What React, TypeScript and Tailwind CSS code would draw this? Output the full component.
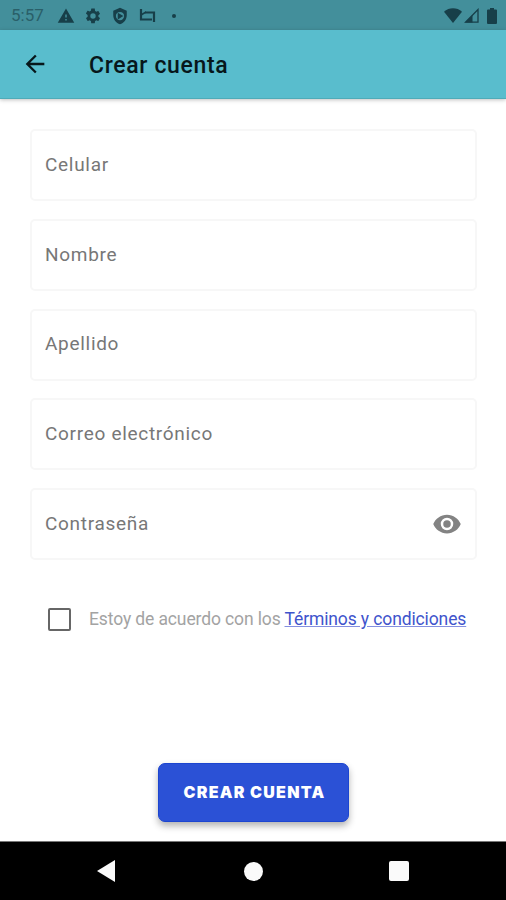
import type { ReactNode } from "react"

const fields = [
  { label: "Celular" },
  { label: "Nombre" },
  { label: "Apellido" },
  { label: "Correo electrónico" },
  { label: "Contraseña", secret: true },
]

function Glyph({ className, children }: { className: string; children: ReactNode }) {
  return (
    <svg viewBox="0 0 24 24" fill="currentColor" className={`shrink-0 ${className}`} aria-hidden="true">
      {children}
    </svg>
  )
}

function StatusBar() {
  return (
    <div className="flex h-[30px] items-center bg-[#438f9b] pl-[11px] pr-[7px] pt-px text-[#173f49]">
      <span className="w-[46px] text-[17px] leading-none text-[#2a5f69]">5:57</span>
      <Glyph className="h-[18px] w-[18px]">
        <path d="M1 21h22L12 2 1 21zm12-3h-2v-2h2v2zm0-4h-2v-4h2v4z" />
      </Glyph>
      <Glyph className="ml-[9px] h-[18px] w-[18px]">
        <path d="M19.14 12.94c.04-.3.06-.61.06-.94s-.02-.64-.07-.94l2.03-1.58a.49.49 0 0 0 .12-.61l-1.92-3.32a.49.49 0 0 0-.59-.22l-2.39.96a7 7 0 0 0-1.62-.94l-.36-2.54A.48.48 0 0 0 13.92 2h-3.84a.48.48 0 0 0-.48.41l-.36 2.54c-.59.24-1.13.57-1.62.94l-2.39-.96a.48.48 0 0 0-.59.22L2.72 8.47a.48.48 0 0 0 .12.61l2.03 1.58a7.8 7.8 0 0 0 0 2.28l-2.03 1.58a.49.49 0 0 0-.12.61l1.92 3.32c.12.22.37.29.59.22l2.39-.96c.5.38 1.03.7 1.62.94l.36 2.54c.05.24.24.41.48.41h3.84c.24 0 .44-.17.47-.41l.36-2.54a7 7 0 0 0 1.62-.94l2.39.96c.22.08.47 0 .59-.22l1.92-3.32a.48.48 0 0 0-.12-.61zM12 15.6a3.6 3.6 0 1 1 0-7.2 3.6 3.6 0 0 1 0 7.2z" />
      </Glyph>
      <Glyph className="ml-[9px] h-[18px] w-[18px]">
        <path
          fillRule="evenodd"
          d="M12 1 3 5v6c0 5.55 3.84 10.74 9 12 5.16-1.26 9-6.45 9-12V5zM12 6.500a5.500 5.500 0 1 0 0 11 5.500 5.500 0 0 0 0-11z"
        />
        <path d="M9 7.500v9l7.500-4.500z" />
      </Glyph>
      <svg viewBox="0 0 18 18" className="ml-[9px] h-[18px] w-[18px] shrink-0" fill="none" stroke="currentColor" strokeWidth="2.200" aria-hidden="true">
        <path d="M3 2v10.500h11M7 5.500h9V15" />
        <path d="m3 8 5-3" strokeWidth="1.500" />
      </svg>
      <span className="ml-[16px] h-1 w-1 rounded-full bg-current" />

      <div className="ml-auto flex items-center">
        <svg viewBox="0 0 18 15" className="h-[15px] w-[18px]" fill="currentColor" aria-hidden="true">
          <path d="M0 3.800C5-.8 13-.8 18 3.800L9 15z" />
        </svg>
        <svg viewBox="0 0 15 15" className="ml-[2px] h-[15px] w-[15px]" fill="none" stroke="currentColor" strokeWidth="1.300" aria-hidden="true">
          <path d="M1.500 14.200 14 1.500v12.700z" />
          <path d="M1 14.500 8.500 7v7.500z" fill="currentColor" stroke="none" />
        </svg>
        <svg viewBox="0 0 10 16" className="ml-[8px] mr-[2px] h-4 w-[10px]" fill="currentColor" aria-hidden="true">
          <path d="M3 0h4v1.500h2a1 1 0 0 1 1 1V15a1 1 0 0 1-1 1H1a1 1 0 0 1-1-1V2.500a1 1 0 0 1 1-1h2z" />
        </svg>
      </div>
    </div>
  )
}

export default function App() {
  return (
    <main className="flex h-[900px] w-[506px] flex-col overflow-hidden bg-white font-[Roboto,sans-serif]">
      <StatusBar />

      <header className="flex h-[69px] items-center border-b border-[#4fabb8] bg-[#59bdcd] pl-[21px] text-[#07171b] shadow-[0_1px_4px_rgba(0,0,0,0.25)]">
        <Glyph className="h-7 w-7">
          <path d="M20 11H7.830l5.590-5.590L12 4l-8 8 8 8 1.410-1.410L7.830 13H20v-2z" />
        </Glyph>
        <h1 className="ml-10 pt-[2px] text-[23px] font-medium leading-none tracking-[0.65px]">Crear cuenta</h1>
      </header>

      <form className="flex flex-1 flex-col pl-[30px] pr-[29px] pt-[30px]">
        <div className="flex flex-col gap-[17.800px]">
          {fields.map((field) => (
            <label
              key={field.label}
              className="flex h-[72px] items-center justify-between rounded-[5px] border-2 border-[#f7f7f7] px-[13px] text-[19px] tracking-[0.7px] text-[#777777]"
            >
              <span>{field.label}</span>
              {field.secret && (
                <Glyph className="h-[30px] w-[30px] text-[#838383]">
                  <path d="M12 4.500C7 4.500 2.730 7.610 1 12c1.730 4.390 6 7.500 11 7.500s9.270-3.110 11-7.500c-1.730-4.390-6-7.500-11-7.500zM12 17a5 5 0 1 1 0-10 5 5 0 0 1 0 10zm0-8a3 3 0 1 0 0 6 3 3 0 0 0 0-6z" />
                </Glyph>
              )}
            </label>
          ))}
        </div>

        <div className="mt-[47px] flex items-center pl-[18px]">
          <span className="h-[23px] w-[23px] shrink-0 rounded-[2px] border-2 border-[#666666]" />
          <p className="ml-[18px] whitespace-nowrap text-[17.500px] leading-6 tracking-[-0.12px] text-[#a3a3a3]">
            Estoy de acuerdo con los{" "}
            <a href="#terminos" className="text-[#4054cc] underline decoration-[#8490e0]">Términos y condiciones</a>
          </p>
        </div>

        <button
          type="button"
          className="mt-auto mb-[19px] ml-[128px] h-[59px] w-[191px] rounded-[7px] border border-[#1c45d0] bg-[#2b51d6] pb-[2px] pl-[2px] font-[Inter,sans-serif] text-[16px] font-black tracking-[1.250px] text-white shadow-[0_4px_7px_rgba(0,0,0,0.3)]"
        >
          CREAR CUENTA
        </button>
      </form>

      <nav className="flex h-[59px] items-center justify-between border-t border-[#777777] bg-black px-[97px] text-[#fafafa]">
        <svg viewBox="0 0 18 22" className="h-[22px] w-[18px]" fill="currentColor" aria-hidden="true">
          <path d="M18 0v22L0 11z" />
        </svg>
        <span className="ml-[2px] h-[19px] w-[19px] rounded-full bg-current" />
        <span className="h-5 w-5 rounded-[2px] bg-current" />
      </nav>
    </main>
  )
}
